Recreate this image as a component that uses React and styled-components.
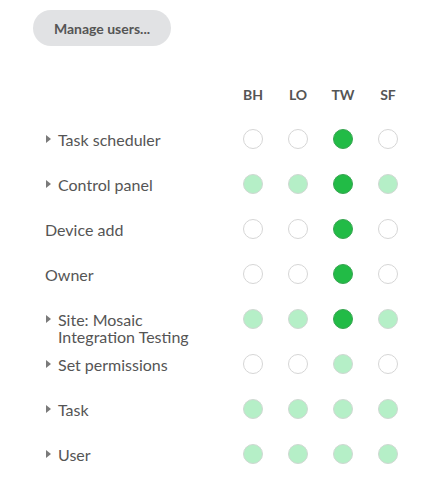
import React from "react";
import styled, { createGlobalStyle } from "styled-components";

const GlobalStyle = createGlobalStyle`
  body {
    margin: 0;
    background: #fff;
    font-family: Lato, "Open Sans", sans-serif;
  }
`;

const Page = styled.div`
  padding: 10px 0 0 33px;
`;

const ManageButton = styled.button`
  height: 36px;
  width: 138px;
  border: none;
  border-radius: 18px;
  background: #e1e2e4;
  color: #555;
  font-family: Lato, sans-serif;
  font-weight: 700;
  font-size: 14px;
  cursor: pointer;
`;

const Table = styled.div`
  display: grid;
  grid-template-columns: 185.5px repeat(4, 45px);
  grid-template-rows: 33.5px;
  grid-auto-rows: 45px;
  margin: 37px 0 0 12px;
`;

const HeadCell = styled.div`
  display: flex;
  align-items: center;
  justify-content: center;
  align-self: start;
  height: 22px;
  font-size: 14px;
  font-weight: 700;
  color: #555;
`;

const Label = styled.div`
  display: flex;
  align-items: flex-start;
  gap: 7px;
  padding-top: 14px;
  font-size: 16px;
  line-height: 17px;
  color: #555;
  white-space: pre-line;
`;

const Caret = styled.span`
  flex: none;
  width: 0;
  height: 0;
  margin-top: 4px;
  margin-left: 1px;
  border-top: 4px solid transparent;
  border-bottom: 4px solid transparent;
  border-left: 5px solid #7a7a7a;
`;

const Cell = styled.div`
  display: flex;
  align-items: center;
  justify-content: center;
`;

const fills = {
  off: { bg: "#ffffff", border: "#d6d6d6" },
  inherit: { bg: "#b5efc7", border: "#cfd8d2" },
  on: { bg: "#22bb46", border: "#39a552" },
};

const Dot = styled.span`
  box-sizing: border-box;
  width: 20px;
  height: 20px;
  border-radius: 50%;
  background: ${(p) => fills[p.$state].bg};
  border: 1px solid ${(p) => fills[p.$state].border};
`;

const columns = ["BH", "LO", "TW", "SF"];

const rows = [
  { name: "Task scheduler", caret: true, cells: ["off", "off", "on", "off"] },
  { name: "Control panel", caret: true, cells: ["inherit", "inherit", "on", "inherit"] },
  { name: "Device add", caret: false, cells: ["off", "off", "on", "off"] },
  { name: "Owner", caret: false, cells: ["off", "off", "on", "off"] },
  { name: "Site: Mosaic\nIntegration Testing", caret: true, cells: ["inherit", "inherit", "on", "inherit"] },
  { name: "Set permissions", caret: true, cells: ["off", "off", "inherit", "off"] },
  { name: "Task", caret: true, cells: ["inherit", "inherit", "inherit", "inherit"] },
  { name: "User", caret: true, cells: ["inherit", "inherit", "inherit", "inherit"] },
];

const App = () => {
  return (
    <Page>
      <GlobalStyle />
      <ManageButton>Manage users...</ManageButton>
      <Table>
        <div />
        {columns.map((c) => (
          <HeadCell key={c}>{c}</HeadCell>
        ))}
        {rows.map((row) => (
          <React.Fragment key={row.name}>
            <Label>
              {row.caret ? <Caret /> : null}
              <span>{row.name}</span>
            </Label>
            {row.cells.map((state, i) => (
              <Cell key={i}>
                <Dot $state={state} />
              </Cell>
            ))}
          </React.Fragment>
        ))}
      </Table>
    </Page>
  );
};

export default App;
